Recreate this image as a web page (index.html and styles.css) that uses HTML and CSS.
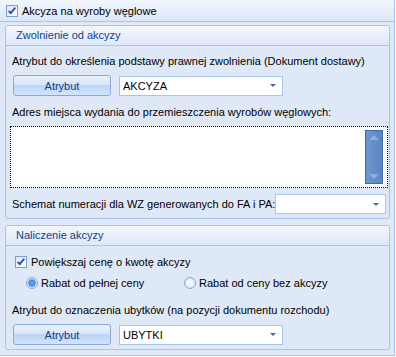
FILE: index.html
```html
<!DOCTYPE html>
<html lang="pl">
<head>
  <meta charset="UTF-8">
  <title>Akcyza na wyroby węglowe</title>
  <link rel="stylesheet" href="styles.css">
</head>
<body>
  <div id="panel">
    <div class="panel-head">
      <span class="check checked"></span>
      <span>Akcyza na wyroby węglowe</span>
    </div>

    <div class="group">
      <div class="group-head">Zwolnienie od akcyzy</div>
      <div class="group-body">
        <div class="label first">Atrybut do określenia podstawy prawnej zwolnienia (Dokument dostawy)</div>
        <div class="row attr">
          <button class="btn">Atrybut</button>
          <div class="combo wide"><span>AKCYZA</span><span class="arrow"></span></div>
        </div>
        <div class="label addr">Adres miejsca wydania do przemieszczenia wyrobów węglowych:</div>
        <div class="memo">
          <div class="scroll">
            <span class="sa up"></span>
            <span class="sa down"></span>
          </div>
        </div>
        <div class="row schema">
          <span>Schemat numeracji dla WZ generowanych do FA i PA:</span>
          <div class="combo short"><span></span><span class="arrow"></span></div>
        </div>
      </div>
    </div>

    <div class="group second">
      <div class="group-head">Naliczenie akcyzy</div>
      <div class="group-body">
        <div class="row check-row">
          <span class="check checked"></span>
          <span>Powiększaj cenę o kwotę akcyzy</span>
        </div>
        <div class="row radios">
          <div class="radio-item first"><span class="radio on"></span>Rabat od pełnej ceny</div>
          <div class="radio-item"><span class="radio"></span>Rabat od ceny bez akcyzy</div>
        </div>
        <div class="label loss">Atrybut do oznaczenia ubytków (na pozycji dokumentu rozchodu)</div>
        <div class="row attr">
          <button class="btn">Atrybut</button>
          <div class="combo wide"><span>UBYTKI</span><span class="arrow"></span></div>
        </div>
      </div>
    </div>
  </div>
</body>
</html>
```

FILE: styles.css
```css
html, body {
  margin: 0;
  padding: 0;
  background: #fff;
  font-family: 'Liberation Sans', Arial, sans-serif;
  font-size: 11px;
  color: #000;
}
#panel {
  width: 395px;
  height: 356px;
  box-sizing: border-box;
  background: #dfe8f6;
  border-right: 1px solid #a9c4ea;
  border-bottom: 1px solid #a9c4ea;
  display: flex;
  flex-direction: column;
}
.panel-head {
  height: 21px;
  display: flex;
  align-items: center;
  gap: 4px;
  padding-left: 6px;
  white-space: nowrap;
  background: linear-gradient(to bottom, #f1f6fd, #dbe7f8);
  border-bottom: 1px solid #a9c4ea;
}
.check {
  width: 10px;
  height: 10px;
  border: 1px solid #7b9ec7;
  background: linear-gradient(135deg, #dce7f5, #ffffff);
  position: relative;
  flex: none;
}
.check.checked::after {
  content: '';
  position: absolute;
  left: 3px;
  top: 0;
  width: 2px;
  height: 6px;
  border: solid #2a5ab8;
  border-width: 0 2px 2px 0;
  transform: rotate(40deg);
}
.group {
  margin: 3px 4px 0 5px;
  border: 1px solid #a9c4ea;
  border-radius: 3px;
  background: #dfe8f6;
}
.group.second {
  margin-top: 6px;
}
.group-head {
  height: 19px;
  line-height: 19px;
  padding-left: 10px;
  color: #15428b;
  white-space: nowrap;
  background: linear-gradient(to bottom, #f3f7fd, #dde8f8);
  border-bottom: 1px solid #a9c4ea;
  border-radius: 3px 3px 0 0;
}
.group-body {
  padding: 0 4px 4px 6px;
  display: flex;
  flex-direction: column;
}
.label {
  height: 16px;
  line-height: 16px;
  white-space: nowrap;
}
.label.first {
  margin-top: 7px;
}
.label.addr {
  margin-top: 8px;
}
.label.loss {
  margin-top: 11px;
}
.row {
  display: flex;
  align-items: center;
  white-space: nowrap;
}
.attr {
  margin-top: 6px;
  height: 21px;
}
.btn {
  width: 98px;
  height: 21px;
  margin: 0 8px 0 1px;
  padding: 0;
  font-family: inherit;
  font-size: 11px;
  color: #15428b;
  border: 1px solid #8aa8d2;
  border-radius: 3px;
  background: linear-gradient(to bottom, #eaf2fd 0%, #d6e5f8 45%, #bcd5f3 50%, #d1e4fb 100%);
}
.combo {
  height: 20px;
  box-sizing: border-box;
  background: #fff;
  border: 1px solid #a9c4ea;
  display: flex;
  align-items: center;
  justify-content: space-between;
  padding-left: 3px;
}
.combo.wide {
  width: 164px;
}
.combo.short {
  width: 111px;
  flex: none;
}
.arrow {
  width: 0;
  height: 0;
  border-left: 3px solid transparent;
  border-right: 3px solid transparent;
  border-top: 3px solid #3b6cb0;
  margin-right: 6px;
}
.memo {
  height: 62px;
  box-sizing: border-box;
  margin: 6px -3px 0 -2px;
  border: 1px dotted #000;
  background: #fff;
  display: flex;
  justify-content: flex-end;
  padding: 3px 4px 3px 0;
}
.scroll {
  width: 18px;
  box-sizing: border-box;
  background: linear-gradient(to right, #6f95cc, #5c86c3);
  border: 1px solid #3e6aa8;
  display: flex;
  flex-direction: column;
  justify-content: space-between;
  align-items: center;
  padding: 4px 0;
}
.sa {
  width: 0;
  height: 0;
  border-left: 5px solid transparent;
  border-right: 5px solid transparent;
}
.sa.up {
  border-bottom: 5px solid #8eaedc;
}
.sa.down {
  border-top: 5px solid #8eaedc;
}
.schema {
  margin-top: 6px;
  height: 20px;
  justify-content: space-between;
}
.check-row {
  gap: 4px;
  margin: 8px 0 0 3px;
  height: 16px;
}
.radios {
  height: 16px;
  margin-top: 5px;
  margin-left: 14px;
}
.radio-item {
  display: flex;
  align-items: center;
  gap: 3px;
}
.radio-item.first {
  width: 158px;
}
.radio {
  width: 12px;
  height: 12px;
  border-radius: 50%;
  border: 1px solid #8aa8d2;
  background: radial-gradient(circle, #f4f8fd 30%, #c9d9ef 100%);
  box-sizing: border-box;
}
.radio.on {
  background: radial-gradient(circle, #5bb2ef 0%, #3a8de0 45%, #c9e2f8 60%, #eaf2fb 100%);
}
```
